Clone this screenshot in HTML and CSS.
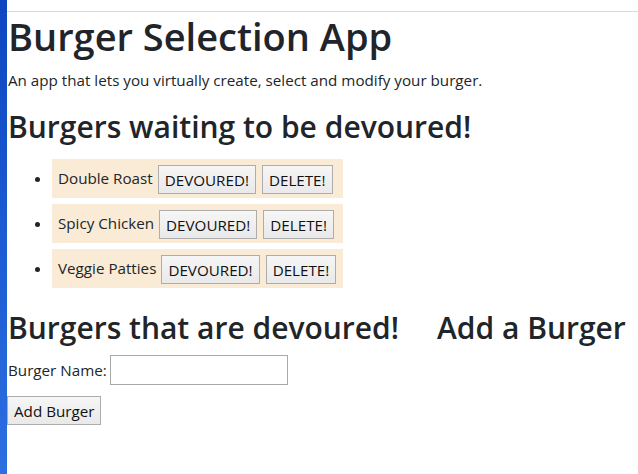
FILE: index.html
```html
<!DOCTYPE html>
<html lang="en">
<head>
<meta charset="utf-8">
<title>Burger Selection App</title>
<link rel="stylesheet" href="styles.css">
</head>
<body>
<div class="desktop-edge"></div>
<div class="page">
  <h1 class="title">Burger Selection App</h1>
  <p class="lead">An app that lets you virtually create, select and modify your burger.</p>
  <h2 class="section">Burgers waiting to be devoured!</h2>
  <ul class="burger-list">
    <li class="burger"><span class="burger-name">Double Roast</span><button class="btn">DEVOURED!</button><button class="btn">DELETE!</button></li>
    <li class="burger"><span class="burger-name">Spicy Chicken</span><button class="btn">DEVOURED!</button><button class="btn">DELETE!</button></li>
    <li class="burger"><span class="burger-name">Veggie Patties</span><button class="btn">DEVOURED!</button><button class="btn">DELETE!</button></li>
  </ul>
  <div class="columns">
    <h2 class="section">Burgers that are devoured!</h2>
    <h2 class="section">Add a Burger</h2>
  </div>
  <form class="add-form">
    <div class="field">
      <label class="field-label" for="burger-name">Burger Name:</label>
      <input class="field-input" id="burger-name" type="text">
    </div>
    <button class="btn" type="button">Add Burger</button>
  </form>
</div>
</body>
</html>
```

FILE: styles.css
```css
html, body {
  margin: 0;
  padding: 0;
  height: 100%;
  background: #fff;
}
body {
  display: flex;
  font-family: "Open Sans", "Noto Sans", sans-serif;
  color: #212529;
  font-size: 15.2px;
}
.desktop-edge {
  width: 7px;
  flex: none;
  background: linear-gradient(180deg, #0d46c0 0%, #1c5bd2 50%, #2c6fe0 100%);
}
.page {
  flex: 1;
  margin-top: 11px;
  border-top: 1px solid #dadada;
  padding-left: 1px;
}
.title {
  font-size: 38px;
  font-weight: 600;
  line-height: 48px;
  margin: 0 0 8px;
}
.lead {
  margin: 0 0 16px;
  line-height: 24px;
}
.section {
  font-size: 30px;
  font-weight: 600;
  line-height: 38px;
  margin: 0 0 8px;
  white-space: nowrap;
}
.burger-list {
  margin: 0 0 21px;
  padding: 5px 0 0 44px;
}
.burger {
  width: 291px;
  height: 39px;
  box-sizing: border-box;
  margin: 0 0 6px;
  padding: 0 6px;
  background: #faebd7;
  white-space: nowrap;
}
.burger-name {
  display: inline-block;
  margin-right: 5px;
  line-height: 39px;
}
.btn {
  font-family: inherit;
  font-size: 15.2px;
  color: #111;
  height: 29px;
  padding: 0 6px;
  margin-right: 6px;
  border: 1px solid #adadad;
  border-radius: 0;
  background: linear-gradient(180deg, #f6f6f6, #e9e9e9);
  white-space: nowrap;
  vertical-align: middle;
}
.columns {
  display: grid;
  grid-template-columns: 429px auto;
}
.add-form {
  margin: 0;
}
.field {
  display: flex;
  align-items: center;
  gap: 3px;
  margin-bottom: 11px;
}
.field-input {
  width: 178px;
  height: 30px;
  box-sizing: border-box;
  border: 1px solid #a9a9a9;
  font: inherit;
}
.add-form .btn {
  display: block;
  margin-left: -1px;
}
```
